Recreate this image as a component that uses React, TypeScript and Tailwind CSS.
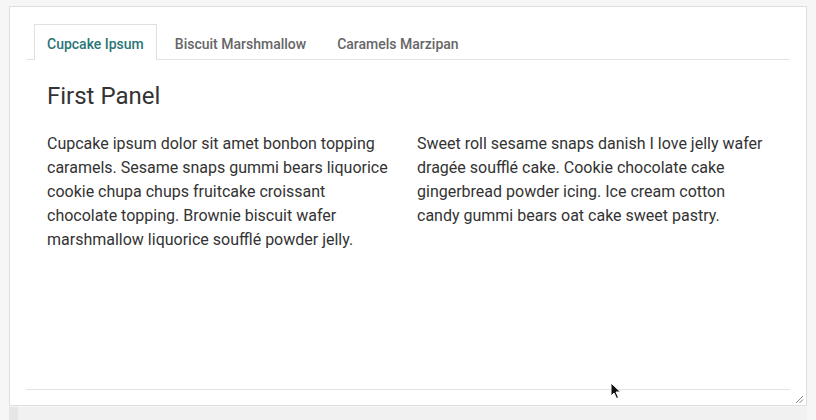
import React, { useState } from "react";

const tabs = ["Cupcake Ipsum", "Biscuit Marshmallow", "Caramels Marzipan"];

export default function App() {
  const [active, setActive] = useState(0);
  return (
    <div
      className="relative w-[816px] h-[420px] overflow-hidden bg-[#f6f6f6]"
      style={{ fontFamily: "Roboto, 'Noto Sans', sans-serif" }}
    >
      <div className="relative ml-[9px] mt-[6px] flex h-[400px] w-[798px] flex-col border border-[#dedede] bg-white px-[16px] pt-[17px]">
        <div className="flex border-b border-[#e3e3e3] pl-[8px]">
          {tabs.map((t, i) => (
            <button
              key={t}
              onClick={() => setActive(i)}
              className={
                i === active
                  ? "-mb-px mr-[5px] border border-b-0 border-[#e0e0e0] bg-white px-[12px] pt-[9px] pb-[6px] text-[14px] leading-[20px] font-medium text-[#2b7676]"
                  : "-mb-px mr-[5px] border border-b-0 border-transparent px-[12px] pt-[9px] pb-[6px] text-[14px] leading-[20px] font-medium text-[#666666]"
              }
            >
              {t}
            </button>
          ))}
        </div>
        <div className="px-[21px] pt-[20px]">
          <h2 className="text-[24px] leading-[32px] font-normal text-[#333333]">First Panel</h2>
          <div className="mt-[20px] grid grid-cols-[350px_350px] gap-x-[20px] text-[16px] leading-[24px] text-[#333333]">
            <p>
              Cupcake ipsum dolor sit amet bonbon topping caramels. Sesame snaps gummi bears liquorice cookie chupa
              chups fruitcake croissant chocolate topping. Brownie biscuit wafer marshmallow liquorice soufflé powder
              jelly.
            </p>
            <p>
              Sweet roll sesame snaps danish I love jelly wafer dragée soufflé cake. Cookie chocolate cake gingerbread
              powder icing. Ice cream cotton candy gummi bears oat cake sweet pastry.
            </p>
          </div>
        </div>
        <div className="mt-auto h-[16px] border-t border-[#e3e3e3]" />
        <svg className="absolute right-[2px] bottom-[1px]" width="9" height="9" viewBox="0 0 9 9">
          <line x1="1" y1="8" x2="8" y2="1" stroke="#888" strokeWidth="1" />
          <line x1="4.5" y1="8" x2="8" y2="4.5" stroke="#888" strokeWidth="1" />
        </svg>
      </div>
      <div className="ml-[9px] mt-[1px] flex h-[20px] w-[798px]">
        <div className="h-full w-[9px] bg-[#e6e6e6]" />
        <div className="h-full flex-1 bg-[#f1f1f1]" />
      </div>
      <svg className="absolute left-[610px] top-[382px]" width="12" height="18" viewBox="0 0 12 18">
        <path d="M1 1 L1 14 L4 11 L6.5 16.5 L8.5 15.5 L6 10 L10.5 10 Z" fill="#111" stroke="#fff" strokeWidth="1" />
      </svg>
    </div>
  );
}
